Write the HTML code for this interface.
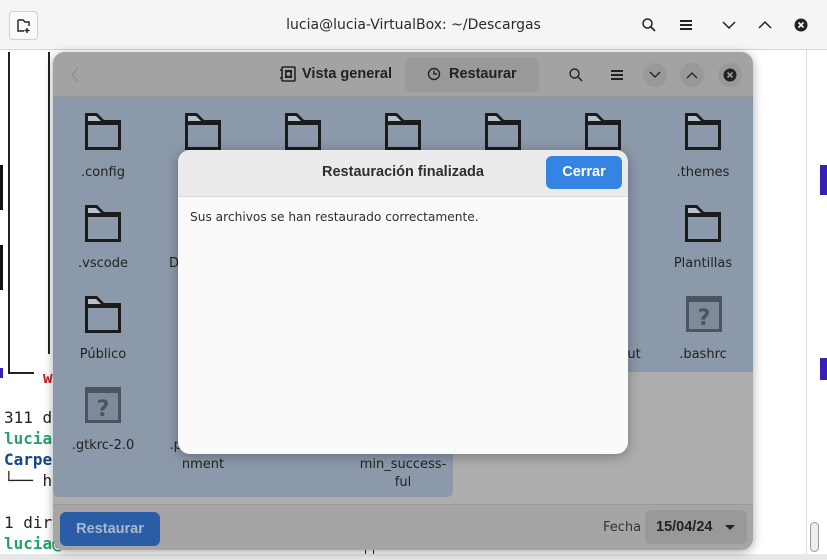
<!DOCTYPE html>
<html><head><meta charset="utf-8"><style>
*{box-sizing:border-box;margin:0;padding:0}
body{width:827px;height:560px;overflow:hidden;position:relative;background:#fff;font-family:"Liberation Sans","DejaVu Sans",sans-serif}
.abs{position:absolute}
.mono{font-family:"DejaVu Sans Mono","Liberation Mono",monospace;font-size:16px;position:absolute;white-space:pre}
.lbl{position:absolute;width:100px;text-align:center;font-size:13px;color:#222;font-family:"DejaVu Sans","Liberation Sans",sans-serif;line-height:18px}
.ic{position:absolute}
.b{font-family:"Liberation Sans",sans-serif;font-weight:bold}
</style></head><body>
<div class="abs" style="left:0;top:0;width:827px;height:50px;background:#f5f5f5;border-bottom:1px solid #d4d4d4"></div>
<div class="abs" style="left:9px;top:11px;width:29px;height:29px;border:1px solid #cfcfcf;border-radius:4px;background:#fafafa"></div>
<svg class="abs" style="left:16px;top:18px" width="16" height="16"><path d="M2 2h5l2 2h4v4M2 2v11h6M11 10v5M8.5 12.5h5" fill="none" stroke="#222" stroke-width="1.4"/></svg>
<div class="abs" style="left:0;width:827px;top:17px;text-align:center;font-size:14px;color:#2a2a2a;font-family:'DejaVu Sans',sans-serif">lucia@lucia-VirtualBox: ~/Descargas</div>
<svg class="abs" style="left:641px;top:17px" width="16" height="16"><circle cx="6.5" cy="6.5" r="4.5" fill="none" stroke="#222" stroke-width="1.5"/><path d="M10 10l4 4" stroke="#222" stroke-width="1.6"/></svg>
<svg class="abs" style="left:679px;top:18px" width="14" height="14"><path d="M1 3h12M1 7h12M1 11h12" stroke="#222" stroke-width="2"/></svg>
<svg class="abs" style="left:721px;top:19px" width="16" height="12"><path d="M2 3l6 6 6-6" fill="none" stroke="#222" stroke-width="1.5"/></svg>
<svg class="abs" style="left:757px;top:19px" width="16" height="12"><path d="M2 9l6-6 6 6" fill="none" stroke="#222" stroke-width="1.5"/></svg>
<svg class="abs" style="left:794px;top:18px" width="14" height="14"><circle cx="7" cy="7" r="6.5" fill="#222"/><path d="M4.5 4.5l5 5M9.5 4.5l-5 5" stroke="#fff" stroke-width="1.6"/></svg>
<div class="abs" style="left:0;top:165px;width:3px;height:45px;background:#111"></div>
<div class="abs" style="left:0;top:245px;width:3px;height:45px;background:#111"></div>
<div class="abs" style="left:0;top:368px;width:3px;height:10px;background:#3a1fb5"></div>
<div class="abs" style="left:8px;top:52px;width:2px;height:322px;background:#222"></div>
<div class="abs" style="left:8px;top:372px;width:26px;height:2px;background:#222"></div>
<div class="abs" style="left:48px;top:52px;width:2px;height:302px;background:#222"></div>
<div class="mono" style="left:43px;top:368px;color:#c01c28;font-weight:bold">w</div>
<div class="mono" style="left:4px;top:408px;color:#222">311 d</div>
<div class="mono" style="left:4px;top:429px;color:#26a269;font-weight:bold">lucia</div>
<div class="mono" style="left:4px;top:450px;color:#12488b;font-weight:bold">Carpe</div>
<div class="mono" style="left:4px;top:471px;color:#222">└── h</div>
<div class="mono" style="left:4px;top:513px;color:#222">1 dir</div>
<div class="mono" style="left:4px;top:534px;color:#26a269;font-weight:bold">lucia@</div>
<div class="abs" style="left:365px;top:546px;width:9px;height:12px;border:1px solid #222"></div>
<div class="abs" style="left:820px;top:165px;width:7px;height:30px;background:#3a1fb5"></div>
<div class="abs" style="left:820px;top:358px;width:7px;height:22px;background:#3a1fb5"></div>
<div class="abs" style="left:806px;top:50px;width:1px;height:510px;background:#ddd"></div>
<div class="abs" style="left:810px;top:522px;width:9px;height:30px;border:1px solid #999;border-radius:5px;background:#eee"></div>
<div class="abs" style="left:0;top:554px;width:827px;height:6px;background:#e8e8e8"></div>

<div class="abs" style="left:53px;top:52px;width:700px;height:498px;border-radius:12px;background:#adadad;overflow:hidden;box-shadow:0 2px 10px rgba(0,0,0,.35)">
  <div class="abs" style="left:0;top:0;width:700px;height:45px;background:#a3a3a3;border-bottom:1px solid #959595"></div>
  <svg class="abs" style="left:17px;top:15px" width="10" height="16"><path d="M8 1L2 8l6 7" fill="none" stroke="#8e8e8e" stroke-width="1.3"/></svg>
  <svg class="abs" style="left:227px;top:14px" width="16" height="16"><rect x="2" y="1" width="13" height="14" rx="1" fill="none" stroke="#222" stroke-width="1.6"/><rect x="5" y="4" width="7" height="8" fill="#222"/><circle cx="8.5" cy="8" r="2" fill="#a3a3a3"/><path d="M0 4h2M0 12h2" stroke="#222" stroke-width="1.5"/></svg>
  <div class="abs b" style="left:249px;top:14px;font-size:14.5px;color:#222">Vista general</div>
  <div class="abs" style="left:352px;top:6px;width:134px;height:34px;background:#999;border-radius:6px"></div>
  <svg class="abs" style="left:374px;top:15px" width="14" height="14"><circle cx="7" cy="7" r="5.5" fill="none" stroke="#222" stroke-width="1.4"/><path d="M7 3.5V7h3" fill="none" stroke="#222" stroke-width="1.4"/></svg>
  <div class="abs b" style="left:396px;top:14px;font-size:14.5px;color:#222">Restaurar</div>
  <svg class="abs" style="left:515px;top:15px" width="16" height="16"><circle cx="6.5" cy="6.5" r="4.5" fill="none" stroke="#222" stroke-width="1.4"/><path d="M10 10l4 4" stroke="#222" stroke-width="1.5"/></svg>
  <svg class="abs" style="left:557px;top:17px" width="14" height="12"><path d="M1 2h12M1 6h12M1 10h12" stroke="#222" stroke-width="2"/></svg>
  <div class="abs" style="left:590px;top:11px;width:24px;height:24px;border-radius:50%;background:#999"></div>
  <svg class="abs" style="left:596px;top:18px" width="12" height="10"><path d="M1 2l5 5 5-5" fill="none" stroke="#222" stroke-width="1.3"/></svg>
  <div class="abs" style="left:627px;top:11px;width:24px;height:24px;border-radius:50%;background:#999"></div>
  <svg class="abs" style="left:633px;top:18px" width="12" height="10"><path d="M1 8l5-5 5 5" fill="none" stroke="#222" stroke-width="1.3"/></svg>
  <div class="abs" style="left:665px;top:11px;width:24px;height:24px;border-radius:50%;background:#999"></div>
  <svg class="abs" style="left:670px;top:16px" width="14" height="14"><circle cx="7" cy="7" r="6.5" fill="#222"/><path d="M4.5 4.5l5 5M9.5 4.5l-5 5" stroke="#999" stroke-width="1.6"/></svg>
  <div class="abs" style="left:0;top:45px;width:700px;height:275px;background:#8c99ab"></div>
  <div class="abs" style="left:0;top:318px;width:400px;height:127px;background:#8c99ab;border-radius:0 0 6px 6px"></div>
  <div class="abs" style="left:0;top:452px;width:700px;height:46px;background:#a5a5a5;border-top:1px solid #999"></div>
  <div class="abs b" style="left:7px;top:460px;width:100px;height:34px;background:#2a5da6;border-radius:6px;color:#a9b8cf;font-size:14.5px;text-align:center;line-height:34px">Restaurar</div>
  <div class="abs" style="left:550px;top:468px;font-size:13px;color:#333;font-family:'DejaVu Sans',sans-serif">Fecha</div>
  <div class="abs" style="left:592px;top:458px;width:102px;height:34px;background:#999;border-radius:6px"></div>
  <div class="abs b" style="left:603px;top:467px;font-size:14.5px;color:#222">15/04/24</div>
  <svg class="abs" style="left:671px;top:472px" width="12" height="8"><path d="M1 1h10L6 6z" fill="#222"/></svg>
</div>

<svg width="0" height="0" style="position:absolute"><defs>
<g id="fd"><path d="M0 0h12l7 7h17v30H0z" fill="#1b1b1b"/><rect x="3" y="12" width="30" height="22" fill="#8c99ab"/><path d="M3 3h8l5 5H3z" fill="#b9c0cb"/></g>
<g id="un"><rect x="0" y="0" width="36" height="36" fill="#4b5561"/><rect x="3" y="6" width="30" height="27" fill="#7e8a9a"/><text x="18" y="29" text-anchor="middle" font-family="DejaVu Sans" font-weight="bold" font-size="22" fill="#4b5561">?</text></g>
</defs></svg>
<svg class="ic" style="left:85px;top:113px" width="36" height="37"><use href="#fd"/></svg>
<svg class="ic" style="left:185px;top:113px" width="36" height="37"><use href="#fd"/></svg>
<svg class="ic" style="left:285px;top:113px" width="36" height="37"><use href="#fd"/></svg>
<svg class="ic" style="left:385px;top:113px" width="36" height="37"><use href="#fd"/></svg>
<svg class="ic" style="left:485px;top:113px" width="36" height="37"><use href="#fd"/></svg>
<svg class="ic" style="left:585px;top:113px" width="36" height="37"><use href="#fd"/></svg>
<svg class="ic" style="left:685px;top:113px" width="36" height="37"><use href="#fd"/></svg>
<div class="lbl" style="left:53px;top:164px">.config</div>
<div class="lbl" style="left:653px;top:164px">.themes</div>
<svg class="ic" style="left:85px;top:205px" width="36" height="37"><use href="#fd"/></svg>
<svg class="ic" style="left:685px;top:205px" width="36" height="37"><use href="#fd"/></svg>
<div class="lbl" style="left:53px;top:255px">.vscode</div>
<div class="lbl" style="left:153px;top:255px">Descargas</div>
<div class="lbl" style="left:653px;top:255px">Plantillas</div>
<svg class="ic" style="left:85px;top:296px" width="36" height="37"><use href="#fd"/></svg>
<div class="lbl" style="left:53px;top:346px">Público</div>
<div class="lbl" style="left:572px;top:346px">about</div>
<svg class="ic" style="left:686px;top:296px" width="36" height="36"><use href="#un"/></svg>
<div class="lbl" style="left:653px;top:346px">.bashrc</div>
<svg class="ic" style="left:85px;top:387px" width="36" height="36"><use href="#un"/></svg>
<div class="lbl" style="left:53px;top:437px">.gtkrc-2.0</div>
<div class="lbl" style="left:153px;top:437px">.pam_envi</div>
<div class="lbl" style="left:153px;top:456px">nment</div>
<div class="lbl" style="left:353px;top:456px">min_success-<br>ful</div>

<div class="abs" style="left:178px;top:150px;width:450px;height:304px;background:#fafafa;border-radius:12px;overflow:hidden;box-shadow:0 2px 12px rgba(0,0,0,.3)">
  <div class="abs" style="left:0;top:0;width:450px;height:47px;background:#ebebeb;border-bottom:1px solid #d8d8d8"></div>
  <div class="abs b" style="left:0;width:450px;top:14px;text-align:center;font-size:14.5px;color:#2e2e2e">Restauración finalizada</div>
  <div class="abs b" style="left:368px;top:6px;width:76px;height:33px;background:#3584e4;border-radius:6px;color:#fff;font-size:14.5px;text-align:center;line-height:33px">Cerrar</div>
  <div class="abs" style="left:12px;top:60px;font-size:12.2px;color:#2e2e2e;font-family:'DejaVu Sans',sans-serif">Sus archivos se han restaurado correctamente.</div>
</div>
</body></html>
